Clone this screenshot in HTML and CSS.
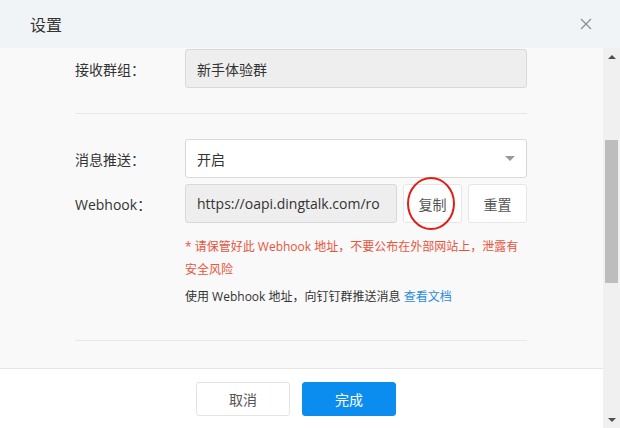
FILE: index.html
```html
<!DOCTYPE html>
<html lang="zh-CN">
<head>
    <meta charset="UTF-8">
    <meta name="viewport" content="width=device-width, initial-scale=1.0">
    <title>设置</title>
    <link rel="stylesheet" href="styles.css">
</head>
<body>
    <div class="dialog">
        <div class="header">
            <span class="title">设置</span>
            <span class="close">
                <svg width="12" height="12" viewBox="0 0 12 12"><path d="M1 1L11 11M11 1L1 11" stroke="#8c8c8c" stroke-width="1.2" fill="none"/></svg>
            </span>
        </div>
        <div class="main">
            <div class="content">
                <div class="body">
                    <div class="form-row">
                        <label>接收群组：</label>
                        <div class="field disabled">新手体验群</div>
                    </div>
                    <div class="divider"></div>
                    <div class="form-row push">
                        <label>消息推送：</label>
                        <div class="field select">
                            <span>开启</span>
                            <span class="caret"></span>
                        </div>
                    </div>
                    <div class="form-row hook">
                        <label>Webhook：</label>
                        <div class="field disabled url">https://oapi.dingtalk.com/ro</div>
                        <div class="btn-wrap">
                            <button class="btn">复制</button>
                            <span class="mark"></span>
                        </div>
                        <button class="btn">重置</button>
                    </div>
                    <div class="warn">* 请保管好此 Webhook 地址，不要公布在外部网站上，泄露有<br>安全风险</div>
                    <div class="tip">使用 Webhook 地址，向钉钉群推送消息 <a href="#">查看文档</a></div>
                    <div class="divider bottom"></div>
                </div>
                <div class="footer">
                    <button class="btn cancel">取消</button>
                    <button class="btn primary">完成</button>
                </div>
            </div>
            <div class="scrollbar">
                <div class="arrow up"></div>
                <div class="track">
                    <div class="thumb"></div>
                </div>
                <div class="arrow down"></div>
            </div>
        </div>
    </div>
</body>
</html>
```

FILE: styles.css
```css
* {
    box-sizing: border-box;
}
body {
    margin: 0;
    font-family: "Open Sans", "Noto Sans CJK SC", sans-serif;
    color: #333;
    background-color: #fff;
}
.dialog {
    width: 620px;
    height: 428px;
    display: flex;
    flex-direction: column;
}
.header {
    height: 48px;
    flex-shrink: 0;
    background-color: #f1f4f7;
    display: flex;
    align-items: center;
    justify-content: space-between;
    padding: 0 30px 0 30px;
}
.title {
    font-size: 16px;
    color: #333;
}
.close {
    display: flex;
    margin-right: -2px;
}
.main {
    flex: 1;
    display: flex;
    min-height: 0;
}
.content {
    flex: 1;
    min-width: 0;
    display: flex;
    flex-direction: column;
}
.body {
    height: 320px;
    background-color: #f9f9f9;
    padding: 1px 76px 0 75px;
}
.form-row {
    display: flex;
    align-items: center;
    font-size: 14px;
}
.form-row label {
    width: 110px;
    color: #333;
}
.field {
    flex: 1;
    height: 39px;
    border: 1px solid #d9d9d9;
    border-radius: 3px;
    padding: 0 11px;
    display: flex;
    align-items: center;
    font-size: 14px;
    color: #333;
}
.field.disabled {
    background-color: #eeeeee;
}
.field.select {
    background-color: #fff;
    justify-content: space-between;
}
.caret {
    width: 0;
    height: 0;
    border-left: 5px solid transparent;
    border-right: 5px solid transparent;
    border-top: 5px solid #999;
}
.divider {
    height: 1px;
    background-color: #e8e8e8;
    margin: 25px 0 25px 0;
}
.push {
    margin-bottom: 6px;
}
.field.url {
    flex: none;
    width: 212px;
    white-space: nowrap;
    overflow: hidden;
}
.btn {
    height: 39px;
    width: 59px;
    border: 1px solid #e6e6e6;
    border-radius: 3px;
    background-color: #fff;
    font-family: inherit;
    font-size: 14px;
    color: #555;
    padding: 0;
}
.btn-wrap {
    position: relative;
    display: flex;
    margin: 0 6px;
}
.mark {
    position: absolute;
    left: 4px;
    top: -7px;
    width: 48px;
    height: 53px;
    border: 2px solid #dc1f18;
    border-radius: 50%;
}
.warn {
    margin: 12px 0 0 110px;
    font-size: 12px;
    line-height: 23px;
    color: #e8553d;
    white-space: nowrap;
}
.tip {
    margin: 6px 0 0 110px;
    font-size: 12px;
    line-height: 20px;
    color: #333;
    white-space: nowrap;
}
.tip a {
    color: #2b8be0;
    text-decoration: none;
}
.divider.bottom {
    margin-top: 33px;
}
.footer {
    flex: 1;
    border-top: 1px solid #e5e5e5;
    background-color: #fff;
    display: flex;
    align-items: center;
    padding-left: 196px;
    gap: 12px;
}
.footer .btn {
    width: 94px;
    height: 34px;
}
.btn.cancel {
    border-color: #e3e3e3;
}
.btn.primary {
    background-color: #0b8df0;
    border-color: #0b8df0;
    color: #fff;
}
.scrollbar {
    width: 17px;
    background-color: #f0f0f0;
    display: flex;
    flex-direction: column;
}
.arrow {
    height: 17px;
    display: flex;
    align-items: center;
    justify-content: center;
}
.arrow::before {
    content: "";
    border-left: 4px solid transparent;
    border-right: 4px solid transparent;
}
.arrow.up::before {
    border-bottom: 4px solid #505050;
}
.arrow.down::before {
    border-top: 4px solid #505050;
}
.track {
    flex: 1;
    padding: 75px 2px 0 2px;
}
.thumb {
    height: 143px;
    background-color: #bdbdbd;
}
```
